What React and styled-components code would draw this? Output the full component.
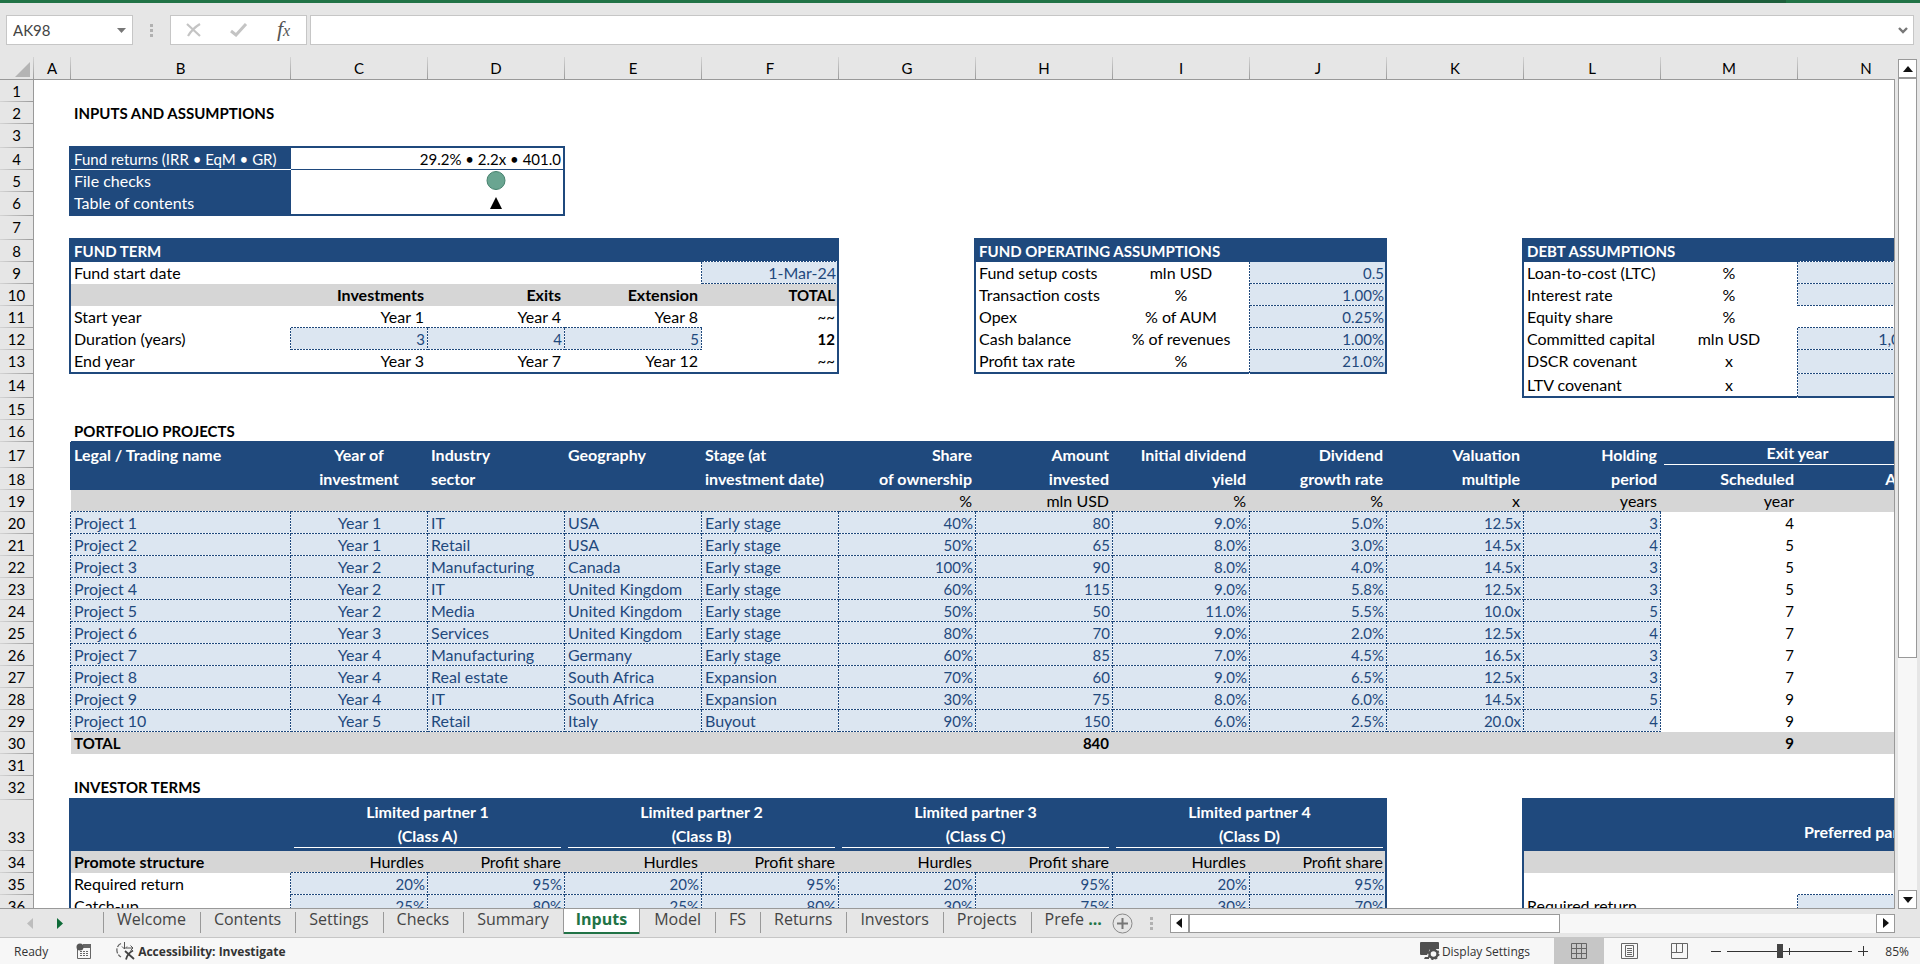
import React from 'react';
import styled, { createGlobalStyle, css } from 'styled-components';

const NAVY = '#1f497d';
const INPUT = '#dce6f1';
const GREY = '#d6d6d6';
const CHROME = '#e6e6e6';
const LINE = '#999999';

const COLUMNS = ['A', 'B', 'C', 'D', 'E', 'F', 'G', 'H', 'I', 'J', 'K', 'L', 'M', 'N', 'O', 'P'];

const PROJECTS = [
    ['Project 1', 'Year 1', 'IT', 'USA', 'Early stage', '40%', '80', '9.0%', '5.0%', '12.5x', '3', '4'],
    ['Project 2', 'Year 1', 'Retail', 'USA', 'Early stage', '50%', '65', '8.0%', '3.0%', '14.5x', '4', '5'],
    ['Project 3', 'Year 2', 'Manufacturing', 'Canada', 'Early stage', '100%', '90', '8.0%', '4.0%', '14.5x', '3', '5'],
    ['Project 4', 'Year 2', 'IT', 'United Kingdom', 'Early stage', '60%', '115', '9.0%', '5.8%', '12.5x', '3', '5'],
    ['Project 5', 'Year 2', 'Media', 'United Kingdom', 'Early stage', '50%', '50', '11.0%', '5.5%', '10.0x', '5', '7'],
    ['Project 6', 'Year 3', 'Services', 'United Kingdom', 'Early stage', '80%', '70', '9.0%', '2.0%', '12.5x', '4', '7'],
    ['Project 7', 'Year 4', 'Manufacturing', 'Germany', 'Early stage', '60%', '85', '7.0%', '4.5%', '16.5x', '3', '7'],
    ['Project 8', 'Year 4', 'Real estate', 'South Africa', 'Expansion', '70%', '60', '9.0%', '6.5%', '12.5x', '3', '7'],
    ['Project 9', 'Year 4', 'IT', 'South Africa', 'Expansion', '30%', '75', '8.0%', '6.0%', '14.5x', '5', '9'],
    ['Project 10', 'Year 5', 'Retail', 'Italy', 'Buyout', '90%', '150', '6.0%', '2.5%', '20.0x', '4', '9'],
];

const HEAD_TOP = ['Legal / Trading name', 'Year of', 'Industry', 'Geography', 'Stage (at', 'Share', 'Amount', 'Initial dividend', 'Dividend', 'Valuation', 'Holding'];
const HEAD_BOTTOM = ['', 'investment', 'sector', '', 'investment date)', 'of ownership', 'invested', 'yield', 'growth rate', 'multiple', 'period'];
const HEAD_UNITS = ['', '', '', '', '', '%', 'mln USD', '%', '%', 'x', 'years'];
const HEAD_ALIGN = ['left', 'center', 'left', 'left', 'left', 'right', 'right', 'right', 'right', 'right', 'right'];

const PARTNERS = [
    ['Limited partner 1', '(Class A)'],
    ['Limited partner 2', '(Class B)'],
    ['Limited partner 3', '(Class C)'],
    ['Limited partner 4', '(Class D)'],
];
const REQUIRED = ['20%', '95%', '20%', '95%', '20%', '95%', '20%', '95%'];
const CATCH_UP = ['25%', '80%', '25%', '80%', '30%', '75%', '30%', '70%'];

const TABS_BEFORE = ['Welcome', 'Contents', 'Settings', 'Checks', 'Summary'];
const TABS_AFTER = ['Model', 'FS', 'Returns', 'Investors', 'Projects'];

const SheetRow = ({ n, h, children }) => (
    <Row $h={h}>
        <RowHead scope="row" $low={h > 40}>
            {n}
        </RowHead>
        {children}
    </Row>
);

const Fill = ({ span, ...rest }) => <Cell colSpan={span} {...rest} />;

const SummaryRows = () => (
    <>
        <SheetRow n={1} />
        <SheetRow n={2}>
            <Cell />
            <Cell $bold $small>
                INPUTS AND ASSUMPTIONS
            </Cell>
        </SheetRow>
        <SheetRow n={3} h={24}>
            <Cell $r="corner" />
            <Fill span={3} $b="medium" />
        </SheetRow>
        <SheetRow n={4}>
            <Cell $r="medium" />
            <Cell $kind="title" $small $b="white">
                Fund returns (IRR • EqM • GR)
            </Cell>
            <Cell colSpan={2} $align="right" $small $r="medium" $b="thin">
                29.2% • 2.2x • 401.0
            </Cell>
        </SheetRow>
        <SheetRow n={5}>
            <Cell $r="medium" />
            <Cell $kind="title">File checks</Cell>
            <Cell />
            <Cell $align="center" $r="medium">
                <Mark width="20" height="20" viewBox="0 0 20 20">
                    <circle cx="10" cy="9.500" r="9" fill="#6aa591" stroke="#44806c" />
                </Mark>
            </Cell>
        </SheetRow>
        <SheetRow n={6} h={24}>
            <Cell $r="medium" />
            <Cell $kind="title">Table of contents</Cell>
            <Cell $b="medium" />
            <Cell $align="center" $r="medium" $b="medium">
                <Mark width="12" height="20" viewBox="0 0 12 20">
                    <path d="M6 4l6 12H0z" fill="#000" />
                </Mark>
            </Cell>
        </SheetRow>
        <SheetRow n={7} h={24}>
            <Cell $r="corner" />
            <Fill span={5} $b="medium" />
            <Cell $r="corner" />
            <Fill span={3} $b="medium" />
            <Cell $r="corner" />
            <Fill span={5} $b="medium" />
        </SheetRow>
    </>
);

const AssumptionRows = () => (
    <>
        <SheetRow n={8}>
            <Cell $r="medium" />
            <Cell colSpan={4} $kind="head" $small>
                FUND TERM
            </Cell>
            <Cell $kind="head" $b="dot" />
            <Cell $r="medium" />
            <Cell colSpan={3} $kind="head" $small>
                FUND OPERATING ASSUMPTIONS
            </Cell>
            <Cell $r="medium" />
            <Cell colSpan={2} $kind="head" $small>
                DEBT ASSUMPTIONS
            </Cell>
            <Fill span={3} $kind="head" $b="dot" />
        </SheetRow>
        <SheetRow n={9}>
            <Cell $r="medium" />
            <Cell colSpan={4} $r="dot">
                Fund start date
            </Cell>
            <Cell $kind="input" $align="right" $r="medium" $b="dot">
                1-Mar-24
            </Cell>
            <Cell $r="medium" />
            <Cell>Fund setup costs</Cell>
            <Cell $align="center" $r="dot">
                mln USD
            </Cell>
            <Cell $kind="input" $align="right" $small $r="medium" $b="dot">
                0.5
            </Cell>
            <Cell $r="medium" />
            <Cell>Loan-to-cost (LTC)</Cell>
            <Cell $align="center" $r="dot">
                %
            </Cell>
            <Fill span={3} $kind="input" $b="dot" />
        </SheetRow>
        <SheetRow n={10}>
            <Cell $r="medium" />
            <Cell $kind="sub" />
            <Cell $kind="sub" $bold $align="right">
                Investments
            </Cell>
            <Cell $kind="sub" $bold $align="right">
                Exits
            </Cell>
            <Cell $kind="sub" $bold $align="right">
                Extension
            </Cell>
            <Cell $kind="sub" $bold $small $align="right" $r="medium">
                TOTAL
            </Cell>
            <Cell $r="medium" />
            <Cell>Transaction costs</Cell>
            <Cell $align="center" $r="dot">
                %
            </Cell>
            <Cell $kind="input" $align="right" $small $r="medium" $b="dot">
                1.00%
            </Cell>
            <Cell $r="medium" />
            <Cell>Interest rate</Cell>
            <Cell $align="center" $r="dot">
                %
            </Cell>
            <Fill span={3} $kind="input" $b="dot" />
        </SheetRow>
        <SheetRow n={11}>
            <Cell $r="medium" />
            <Cell>Start year</Cell>
            <Cell $align="right" $b="dot">
                Year 1
            </Cell>
            <Cell $align="right" $b="dot">
                Year 4
            </Cell>
            <Cell $align="right" $b="dot">
                Year 8
            </Cell>
            <Cell $align="right" $small $r="medium">
                ~~
            </Cell>
            <Cell $r="medium" />
            <Cell>Opex</Cell>
            <Cell $align="center" $r="dot">
                % of AUM
            </Cell>
            <Cell $kind="input" $align="right" $small $r="medium" $b="dot">
                0.25%
            </Cell>
            <Cell $r="medium" />
            <Cell>Equity share</Cell>
            <Cell $align="center">%</Cell>
            <Fill span={3} $b="dot" />
        </SheetRow>
        <SheetRow n={12}>
            <Cell $r="medium" />
            <Cell $r="dot">Duration (years)</Cell>
            {['3', '4', '5'].map((years) => (
                <Cell key={years} $kind="input" $align="right" $small $r="dot" $b="dot">
                    {years}
                </Cell>
            ))}
            <Cell $bold $small $align="right" $r="medium">
                12
            </Cell>
            <Cell $r="medium" />
            <Cell>Cash balance</Cell>
            <Cell $align="center" $r="dot">
                % of revenues
            </Cell>
            <Cell $kind="input" $align="right" $small $r="medium" $b="dot">
                1.00%
            </Cell>
            <Cell $r="medium" />
            <Cell>Committed capital</Cell>
            <Cell $align="center" $r="dot">
                mln USD
            </Cell>
            <Cell $kind="input" $align="right" $b="dot">
                1,000.0
            </Cell>
        </SheetRow>
        <SheetRow n={13} h={24}>
            <Cell $r="medium" />
            <Cell $b="medium">End year</Cell>
            {['Year 3', 'Year 7', 'Year 12'].map((year) => (
                <Cell key={year} $align="right" $b="medium">
                    {year}
                </Cell>
            ))}
            <Cell $align="right" $small $r="medium" $b="medium">
                ~~
            </Cell>
            <Cell $r="medium" />
            <Cell $b="medium">Profit tax rate</Cell>
            <Cell $align="center" $r="dot" $b="medium">
                %
            </Cell>
            <Cell $kind="input" $align="right" $small $r="medium" $b="medium">
                21.0%
            </Cell>
            <Cell $r="medium" />
            <Cell>DSCR covenant</Cell>
            <Cell $align="center" $r="dot">
                x
            </Cell>
            <Fill span={3} $kind="input" $b="dot" />
        </SheetRow>
        <SheetRow n={14} h={24}>
            <Fill span={10} />
            <Cell $r="medium" />
            <Cell $b="medium">LTV covenant</Cell>
            <Cell $align="center" $r="dot" $b="medium">
                x
            </Cell>
            <Fill span={3} $kind="input" $b="medium" />
        </SheetRow>
        <SheetRow n={15} />
    </>
);

const ProjectRows = () => (
    <>
        <SheetRow n={16}>
            <Cell />
            <Cell $bold $small $b="thin">
                PORTFOLIO PROJECTS
            </Cell>
            <Fill span={14} $b="thin" />
        </SheetRow>
        <SheetRow n={17} h={26}>
            <Cell $r="thin" />
            {HEAD_TOP.map((text, i) => (
                <Cell key={text} $kind="head" $align={HEAD_ALIGN[i]}>
                    {text}
                </Cell>
            ))}
            <Cell colSpan={2} $kind="head">
                <Underlined>Exit year</Underlined>
            </Cell>
            <Fill span={2} $kind="head" />
        </SheetRow>
        <SheetRow n={18}>
            <Cell $r="thin" />
            {HEAD_BOTTOM.map((text, i) => (
                <Cell key={i} $kind="head" $align={HEAD_ALIGN[i]}>
                    {text}
                </Cell>
            ))}
            <Cell $kind="head" $align="right">
                Scheduled
            </Cell>
            <Cell $kind="head" $align="right">
                Actual
            </Cell>
            <Fill span={2} $kind="head" />
        </SheetRow>
        <SheetRow n={19}>
            <Cell />
            {HEAD_UNITS.map((text, i) => (
                <Cell key={i} $kind="sub" $align={HEAD_ALIGN[i]} $b="dot">
                    {text}
                </Cell>
            ))}
            <Cell $kind="sub" $align="right">
                year
            </Cell>
            <Fill span={3} $kind="sub" />
        </SheetRow>
        {PROJECTS.map((project, row) => (
            <SheetRow key={project[0]} n={20 + row}>
                <Cell $r="dot" />
                {project.slice(0, 11).map((value, i) => (
                    <Cell key={i} $kind="input" $align={HEAD_ALIGN[i]} $small={i > 4} $r="dot" $b="dot">
                        {value}
                    </Cell>
                ))}
                <Cell $align="right" $small>
                    {project[11]}
                </Cell>
            </SheetRow>
        ))}
        <SheetRow n={30}>
            <Cell />
            <Cell $kind="sub" $bold $small>
                TOTAL
            </Cell>
            <Fill span={5} $kind="sub" />
            <Cell $kind="sub" $bold $small $align="right">
                840
            </Cell>
            <Fill span={4} $kind="sub" />
            <Cell $kind="sub" $bold $small $align="right">
                9
            </Cell>
            <Fill span={3} $kind="sub" />
        </SheetRow>
        <SheetRow n={31} />
    </>
);

const InvestorRows = () => (
    <>
        <SheetRow n={32} h={24}>
            <Cell $r="corner" />
            <Cell $bold $small $b="medium">
                INVESTOR TERMS
            </Cell>
            <Fill span={8} $b="medium" />
            <Cell $r="corner" />
            <Fill span={5} $b="medium" />
        </SheetRow>
        <SheetRow n={33} h={51}>
            <Cell $r="medium" />
            <Cell $kind="head" />
            {PARTNERS.map(([name, share]) => (
                <Cell key={name} colSpan={2} $kind="head" $flush>
                    <Underlined $tall>
                        {name}
                        <br />
                        {share}
                    </Underlined>
                </Cell>
            ))}
            <Cell $r="medium" />
            <Cell colSpan={5} $kind="head" $align="center" $low>
                Preferred partner
            </Cell>
        </SheetRow>
        <SheetRow n={34}>
            <Cell $r="medium" />
            <Cell $kind="sub" $bold>
                Promote structure
            </Cell>
            {REQUIRED.map((_, i) => (
                <Cell key={i} $kind="sub" $align="right" $b="dot" $r={i === 7 ? 'medium' : undefined}>
                    {i % 2 ? 'Profit share' : 'Hurdles'}
                </Cell>
            ))}
            <Cell $r="medium" />
            <Fill span={5} $kind="sub" />
        </SheetRow>
        <SheetRow n={35}>
            <Cell $r="medium" />
            <Cell $r="dot">Required return</Cell>
            {REQUIRED.map((value, i) => (
                <Cell key={i} $kind="input" $align="right" $small $b="dot" $r={i === 7 ? 'medium' : 'dot'}>
                    {value}
                </Cell>
            ))}
            <Cell $r="medium" />
            <Fill span={2} />
            <Fill span={3} $b="dot" />
        </SheetRow>
        <SheetRow n={36}>
            <Cell $r="medium" />
            <Cell $r="dot">Catch-up</Cell>
            {CATCH_UP.map((value, i) => (
                <Cell key={i} $kind="input" $align="right" $small $b="dot" $r={i === 7 ? 'medium' : 'dot'}>
                    {value}
                </Cell>
            ))}
            <Cell $r="medium" />
            <Cell>Required return</Cell>
            <Cell $r="dot" />
            <Fill span={3} $kind="input" $b="dot" />
        </SheetRow>
    </>
);

const Toolbar = () => (
    <FormulaBar>
        <NameBox>
            <NameInput aria-label="Name box" defaultValue="AK98" />
            <svg width="9" height="5" viewBox="0 0 9 5">
                <path d="M0 0h9L4.500 5z" fill="#777" />
            </svg>
        </NameBox>
        <Grip viewBox="0 0 3 13">
            <path d="M0 0h3v3H0zM0 5h3v3H0zM0 10h3v3H0z" fill="#b1b1b1" />
        </Grip>
        <EntryTools>
            <ToolButton aria-label="Cancel">
                <svg width="16" height="14" viewBox="0 0 16 14">
                    <path d="M1 1l13 12M14 1C9 4 5 8 2 13" fill="none" stroke="#c4c4c4" strokeWidth="2.200" />
                </svg>
            </ToolButton>
            <ToolButton aria-label="Enter">
                <svg width="18" height="14" viewBox="0 0 18 14">
                    <path d="M1 8l5 4L16 1" fill="none" stroke="#c4c4c4" strokeWidth="3" />
                </svg>
            </ToolButton>
            <ToolButton aria-label="Insert function">
                <Fx>
                    f<small>x</small>
                </Fx>
            </ToolButton>
        </EntryTools>
        <FormulaBox>
            <FormulaInput aria-label="Formula bar" />
            <svg width="10" height="7" viewBox="0 0 10 7">
                <path d="M1 1l4 4 4-4" fill="none" stroke="#777" strokeWidth="2.400" />
            </svg>
        </FormulaBox>
    </FormulaBar>
);

const TabBar = () => (
    <TabStrip>
        <TabNav>
            <NavButton aria-label="Previous sheets">
                <svg width="6" height="11" viewBox="0 0 6 11">
                    <path d="M6 0v11L0 5.500z" fill="#bdbdbd" />
                </svg>
            </NavButton>
            <NavButton aria-label="Next sheets">
                <svg width="6" height="11" viewBox="0 0 6 11">
                    <path d="M0 0v11l6-5.500z" fill="#0e6b38" />
                </svg>
            </NavButton>
        </TabNav>
        {TABS_BEFORE.map((name) => (
            <Tab key={name}>{name}</Tab>
        ))}
        <ActiveTab>Inputs</ActiveTab>
        {TABS_AFTER.map((name, i) => (
            <Tab key={name} $first={i === 0}>
                {name}
            </Tab>
        ))}
        <CutTab>
            Prefe <More>...</More>
        </CutTab>
        <NavButton aria-label="New sheet">
            <svg width="21" height="21" viewBox="0 0 21 21">
                <circle cx="10.500" cy="10.500" r="9.500" fill="none" stroke="#8a8a8a" />
                <path d="M10.500 5v11M5 10.500h11" stroke="#777" strokeWidth="2" />
            </svg>
        </NavButton>
        <Grip viewBox="0 0 3 13">
            <path d="M0 0h3v3H0zM0 5h3v3H0zM0 10h3v3H0z" fill="#b1b1b1" />
        </Grip>
        <HScroll>
            <ScrollButton aria-label="Scroll left">
                <svg width="6" height="10" viewBox="0 0 6 10">
                    <path d="M6 0v10L0 5z" fill="#111" />
                </svg>
            </ScrollButton>
            <HTrack>
                <HThumb />
            </HTrack>
            <ScrollButton aria-label="Scroll right">
                <svg width="6" height="10" viewBox="0 0 6 10">
                    <path d="M0 0v10l6-5z" fill="#111" />
                </svg>
            </ScrollButton>
        </HScroll>
    </TabStrip>
);

const Status = () => (
    <StatusBar>
        <StatusText>Ready</StatusText>
        <StatusButton aria-label="Record macro">
            <svg width="16" height="16" viewBox="0 0 16 16">
                <path d="M1.500 6v9.500h13V1.500H7" fill="none" stroke="#666" />
                <path d="M7 1h8v4H7z" fill="#666" />
                <circle cx="4" cy="4" r="3.500" fill="#555" />
                <path d="M4 8.500h9M4 10.500h9M4 12.500h9" stroke="#666" strokeDasharray="2 1" />
            </svg>
        </StatusButton>
        <StatusButton $bold>
            <svg width="20" height="18" viewBox="0 0 20 18">
                <path d="M5 1.500C-.500 4-.500 12 5 15" fill="none" stroke="#666" strokeWidth="1.300" strokeDasharray="5 1.500" />
                <path d="M8.500 0v7M6 4.500l2.500 2.500L11 4.500M10 6h7M14.500 3.500L17 6l-2.500 2.500" fill="none" stroke="#555" />
                <path d="M9 9l9 8M17 8.500c-4 2-6 5-7 9" fill="none" stroke="#444" strokeWidth="1.800" />
            </svg>
            Accessibility: Investigate
        </StatusButton>
        <Spacer />
        <StatusButton>
            <svg width="20" height="18" viewBox="0 0 20 18">
                <path d="M1 0h17a1 1 0 0 1 1 1v6H10l-3 6H1a1 1 0 0 1-1-1V1a1 1 0 0 1 1-1zM5 15h4v2H4z" fill="#505050" />
                <circle cx="13.500" cy="12" r="4" fill="none" stroke="#505050" strokeWidth="2.400" />
                <circle cx="13.500" cy="12" r="5" fill="none" stroke="#505050" strokeWidth="2" strokeDasharray="2 1.900" />
            </svg>
            Display Settings
        </StatusButton>
        <Views>
            <ViewButton $on aria-label="Normal">
                <svg width="16" height="16" viewBox="0 0 16 16">
                    <path d="M.500.500h15v15H.500zM5.500 0v16M10.500 0v16M0 5.500h16M0 10.500h16" fill="none" stroke="#666" />
                </svg>
            </ViewButton>
            <ViewButton aria-label="Page layout">
                <svg width="17" height="16" viewBox="0 0 17 16">
                    <path d="M.500.500h16v15H.500zM4.500 2.500h8v11h-8zM6 5.500h5M6 7.500h5M6 9.500h5M6 11.500h5" fill="none" stroke="#666" />
                </svg>
            </ViewButton>
            <ViewButton aria-label="Page break preview">
                <svg width="17" height="16" viewBox="0 0 17 16">
                    <path d="M.500.500h16v15H.500zM0 9.500h11.500V0M5.500 0v9" fill="none" stroke="#666" />
                </svg>
            </ViewButton>
        </Views>
        <ZoomButton aria-label="Zoom out">
            <svg width="10" height="10" viewBox="0 0 10 10">
                <path d="M0 5.500h10" stroke="#333" />
            </svg>
        </ZoomButton>
        <ZoomSlider type="range" min="0" max="100" defaultValue="42" aria-label="Zoom" />
        <ZoomButton aria-label="Zoom in">
            <svg width="10" height="10" viewBox="0 0 10 10">
                <path d="M0 5.500h10M5.500 0v10" stroke="#333" />
            </svg>
        </ZoomButton>
        <ZoomValue>85%</ZoomValue>
    </StatusBar>
);

export default function App() {
    return (
        <Window>
            <GlobalStyle />
            <TopStrip />
            <Toolbar />
            <Workspace>
                <Pane>
                    <Sheet>
                        <colgroup>
                            <Col $w={34} />
                            {COLUMNS.map((name) => (
                                <Col key={name} $w={name === 'A' ? 37 : name === 'B' ? 220 : 137} />
                            ))}
                        </colgroup>
                        <thead>
                            <tr>
                                <Corner>
                                    <svg width="15" height="15" viewBox="0 0 15 15">
                                        <path d="M15 0v15H0z" fill="#b4b4b4" />
                                    </svg>
                                </Corner>
                                {COLUMNS.map((name) => (
                                    <ColHead key={name} scope="col">
                                        {name}
                                    </ColHead>
                                ))}
                            </tr>
                        </thead>
                        <tbody>
                            <SummaryRows />
                            <AssumptionRows />
                            <ProjectRows />
                            <InvestorRows />
                        </tbody>
                    </Sheet>
                </Pane>
                <VScroll>
                    <ScrollButton aria-label="Scroll up">
                        <svg width="10" height="6" viewBox="0 0 10 6">
                            <path d="M5 0l5 6H0z" fill="#111" />
                        </svg>
                    </ScrollButton>
                    <VTrack>
                        <VThumb />
                    </VTrack>
                    <ScrollButton aria-label="Scroll down">
                        <svg width="10" height="6" viewBox="0 0 10 6">
                            <path d="M0 0h10L5 6z" fill="#111" />
                        </svg>
                    </ScrollButton>
                </VScroll>
            </Workspace>
            <TabBar />
            <Status />
        </Window>
    );
}

const GlobalStyle = createGlobalStyle`
    * {
        box-sizing: border-box;
    }
    body {
        margin: 0;
        background: #fff;
        font-family: Lato, 'Open Sans', sans-serif;
        font-size: 15px;
        color: #000;
    }
    button, input {
        margin: 0;
        padding: 0;
        border: 0;
        background: none;
        font: inherit;
        color: inherit;
    }
    svg {
        display: block;
        flex: none;
    }
`;

const Window = styled.div`
    display: flex;
    flex-direction: column;
    height: 100vh;
    padding-bottom: 2px;
    overflow: hidden;
`;

const TopStrip = styled.div`
    flex: none;
    height: 3px;
    background: linear-gradient(to right, #217346 88%, #1e5f3c 88%, #1e5f3c 93%, #217346 93%);
`;

/* formula bar */
const FormulaBar = styled.div`
    display: flex;
    flex: none;
    align-items: center;
    height: 54px;
    padding: 0 6px;
    background: ${CHROME};
`;
const boxed = css`
    display: flex;
    align-items: center;
    height: 30px;
    background: #fff;
    border: 1px solid #c6c6c6;
`;
const NameBox = styled.div`
    ${boxed}
    width: 127px;
    padding: 0 6px;
`;
const NameInput = styled.input`
    flex: 1;
    min-width: 0;
    color: #444;
    outline: 0;
`;
const Grip = styled.svg`
    width: 3px;
    height: 13px;
    margin: 0 17px;
`;
const EntryTools = styled.div`
    ${boxed}
    width: 137px;
    margin-right: 3px;
`;
const ToolButton = styled.button`
    display: flex;
    flex: 1;
    justify-content: center;
`;
const Fx = styled.span`
    font: italic 22px/24px 'Liberation Serif', serif;
    color: #555;

    & small {
        font-size: 16px;
    }
`;
const FormulaBox = styled.div`
    ${boxed}
    flex: 1;
    padding: 0 5px;
`;
const FormulaInput = styled.input`
    flex: 1;
    outline: 0;
`;

/* sheet */
const Workspace = styled.div`
    display: flex;
    flex: 1;
    min-height: 0;
    background: ${CHROME};
`;
const Pane = styled.div`
    position: relative;
    flex: 1;
    min-width: 0;
    overflow: hidden;
    border-bottom: 1px solid ${LINE};
    background: #fff;

    &::after {
        content: '';
        position: absolute;
        top: 22px;
        right: 0;
        bottom: 0;
        width: 1px;
        background: ${LINE};
    }
`;
const Sheet = styled.table`
    table-layout: fixed;
    width: 2209px;
    border-collapse: separate;
    border-spacing: 0;
`;
const Col = styled.col`
    width: ${({ $w }) => $w}px;
`;
const ColHead = styled.th`
    height: 23px;
    padding: 1px 1px 2px 0;
    line-height: 20px;
    font-weight: 400;
    background:
        linear-gradient(${LINE}, ${LINE}) bottom / 100% 1px no-repeat,
        linear-gradient(#d4d4d4, ${LINE}) right / 1px 100% no-repeat ${CHROME};
`;
const Corner = styled(ColHead).attrs({ as: 'td' })`
    padding: 1px 0 0 15px;
`;
/* the 24px rows keep their text at the top, next to the medium line below */
const Row = styled.tr`
    height: ${({ $h = 22 }) => $h}px;
    vertical-align: ${({ $h }) => ($h === 24 ? 'top' : 'middle')};
`;
const RowHead = styled.th`
    padding: ${({ $low }) => ($low ? '27px 1px 4px 0' : '1px 1px 1px 0')};
    line-height: 20px;
    font-weight: 400;
    background:
        linear-gradient(${LINE}, ${LINE}) right / 1px 100% no-repeat,
        linear-gradient(to right, #d4d4d4, ${LINE}) bottom / 100% 1px no-repeat ${CHROME};
`;

const rightEdge = {
    thin: `linear-gradient(${NAVY}, ${NAVY}) right / 1px 100% no-repeat`,
    medium: `linear-gradient(${NAVY}, ${NAVY}) right / 2px 100% no-repeat`,
    corner: `linear-gradient(${NAVY}, ${NAVY}) right bottom / 2px 2px no-repeat`,
    dot: `linear-gradient(${NAVY} 2px, #fff 2px) right top / 1px 3px repeat-y`,
};
const bottomEdge = {
    thin: `linear-gradient(${NAVY}, ${NAVY}) bottom / 100% 1px no-repeat`,
    white: 'linear-gradient(#fff, #fff) bottom / 100% 1px no-repeat',
    medium: `linear-gradient(${NAVY}, ${NAVY}) bottom / 100% 2px no-repeat`,
    dot: `linear-gradient(to right, ${NAVY} 2px, #fff 2px) left bottom / 3px 1px repeat-x`,
};
const kinds = {
    plain: { fill: '#fff', color: '#000' },
    title: { fill: NAVY, color: '#fff' },
    head: { fill: NAVY, color: '#fff', bold: true },
    sub: { fill: GREY, color: '#000' },
    input: { fill: INPUT, color: NAVY },
};

const Cell = styled.td`
    padding: 1px ${({ $kind }) => ($kind === 'input' ? 3 : 4)}px 1px 3px;
    line-height: 20px;
    font-size: ${({ $small }) => ($small ? 15 : 16)}px;
    white-space: nowrap;
    text-align: ${({ $align = 'left' }) => $align};
    ${({ $kind = 'plain', $bold, $r, $b }) => {
        const kind = kinds[$kind];
        const layers = [rightEdge[$r], bottomEdge[$b], `linear-gradient(${kind.fill}, ${kind.fill})`];
        return css`
            color: ${kind.color};
            font-weight: ${$bold || kind.bold ? 700 : 400};
            background: ${layers.filter(Boolean).join(', ')};
        `;
    }}
    ${({ $low }) =>
        $low &&
        css`
            padding-top: 14px;
        `}
    ${({ $flush }) =>
        $flush &&
        css`
            padding-top: 0;
            vertical-align: top;
        `}
`;
const Mark = styled.svg`
    margin: 0 auto;
`;
const Underlined = styled.div`
    padding-bottom: ${({ $tall }) => ($tall ? 2 : 4)}px;
    text-align: center;
    line-height: ${({ $tall }) => ($tall ? 24 : 20)}px;
    background: linear-gradient(#fff, #fff) left bottom 2px / 100% 1px no-repeat;
`;

/* scroll bars */
const ScrollButton = styled.button`
    display: flex;
    flex: none;
    align-items: center;
    justify-content: center;
    width: 19px;
    height: 19px;
    background: #fff;
    border: 1px solid ${LINE};
`;
const VScroll = styled.div`
    display: flex;
    flex: none;
    flex-direction: column;
    width: 25px;
    padding: 2px 3px 0;
`;
const VTrack = styled.div`
    flex: 1;
    width: 19px;
    background: #f7f7f7;
`;
const VThumb = styled.div`
    height: 71.4%;
    background: #fff;
    border: 1px solid ${LINE};
`;
const HScroll = styled.div`
    display: flex;
    flex: 1;
    padding-right: 25px;
`;
const HTrack = styled.div`
    flex: 1;
    background: #f7f7f7;
`;
const HThumb = styled.div`
    width: 54%;
    height: 19px;
    background: #fff;
    border: 1px solid ${LINE};
`;

/* sheet tabs */
const TabStrip = styled.div`
    display: flex;
    flex: none;
    align-items: center;
    height: 28px;
    background: ${CHROME};
    font-family: 'Open Sans', sans-serif;
    font-size: 16px;
    color: #444;
`;
const TabNav = styled.div`
    display: flex;
    gap: 24px;
    width: 103px;
    padding-left: 27px;
`;
const NavButton = styled.button`
    display: flex;
    align-items: center;
`;
const Tab = styled.button`
    align-self: flex-start;
    height: 24px;
    padding: 0 14px 4px;
    line-height: 20px;
    background: linear-gradient(${LINE}, ${LINE}) left bottom / ${({ $first }) => ($first ? 0 : 1)}px 21px no-repeat;
`;
const CutTab = styled(Tab)`
    padding-right: 10px;
`;
const ActiveTab = styled(Tab)`
    height: 25px;
    padding: 0 12px 5px;
    font-weight: 700;
    color: #217346;
    background: #fff;
    border: solid ${LINE};
    border-width: 0 1px;
    box-shadow: inset 0 -2px #217346;
`;
const More = styled.b`
    color: #217346;
`;

/* status bar */
const StatusBar = styled.div`
    display: flex;
    flex: none;
    align-items: center;
    height: 27px;
    padding: 0 11px 0 14px;
    background: #f7f7f7;
    border-top: 1px solid #c6c6c6;
    font-family: 'Open Sans', sans-serif;
    font-size: 12px;
    color: #333;
`;
const StatusText = styled.span`
    margin-right: 28px;
`;
const StatusButton = styled.button`
    display: flex;
    align-items: center;
    gap: 2px;
    margin-right: 24px;
    font-weight: ${({ $bold }) => ($bold ? 700 : 400)};
`;
const Spacer = styled.div`
    flex: 1;
`;
const Views = styled.div`
    display: flex;
    align-self: stretch;
    margin-right: 7px;
`;
const ViewButton = styled.button`
    display: flex;
    align-items: center;
    justify-content: center;
    width: 50px;
    background: ${({ $on }) => ($on ? '#c6c6c6' : 'transparent')};
`;
const ZoomButton = styled.button`
    display: flex;
`;
const ZoomSlider = styled.input`
    appearance: none;
    width: 125px;
    height: 14px;
    margin: 0 6px;
    background:
        linear-gradient(#333, #333) center / 1px 7px no-repeat,
        linear-gradient(#333, #333) center / 100% 1px no-repeat;

    &::-webkit-slider-thumb {
        appearance: none;
        width: 6px;
        height: 14px;
        background: #444;
    }
`;
const ZoomValue = styled.span`
    width: 41px;
    text-align: right;
`;
